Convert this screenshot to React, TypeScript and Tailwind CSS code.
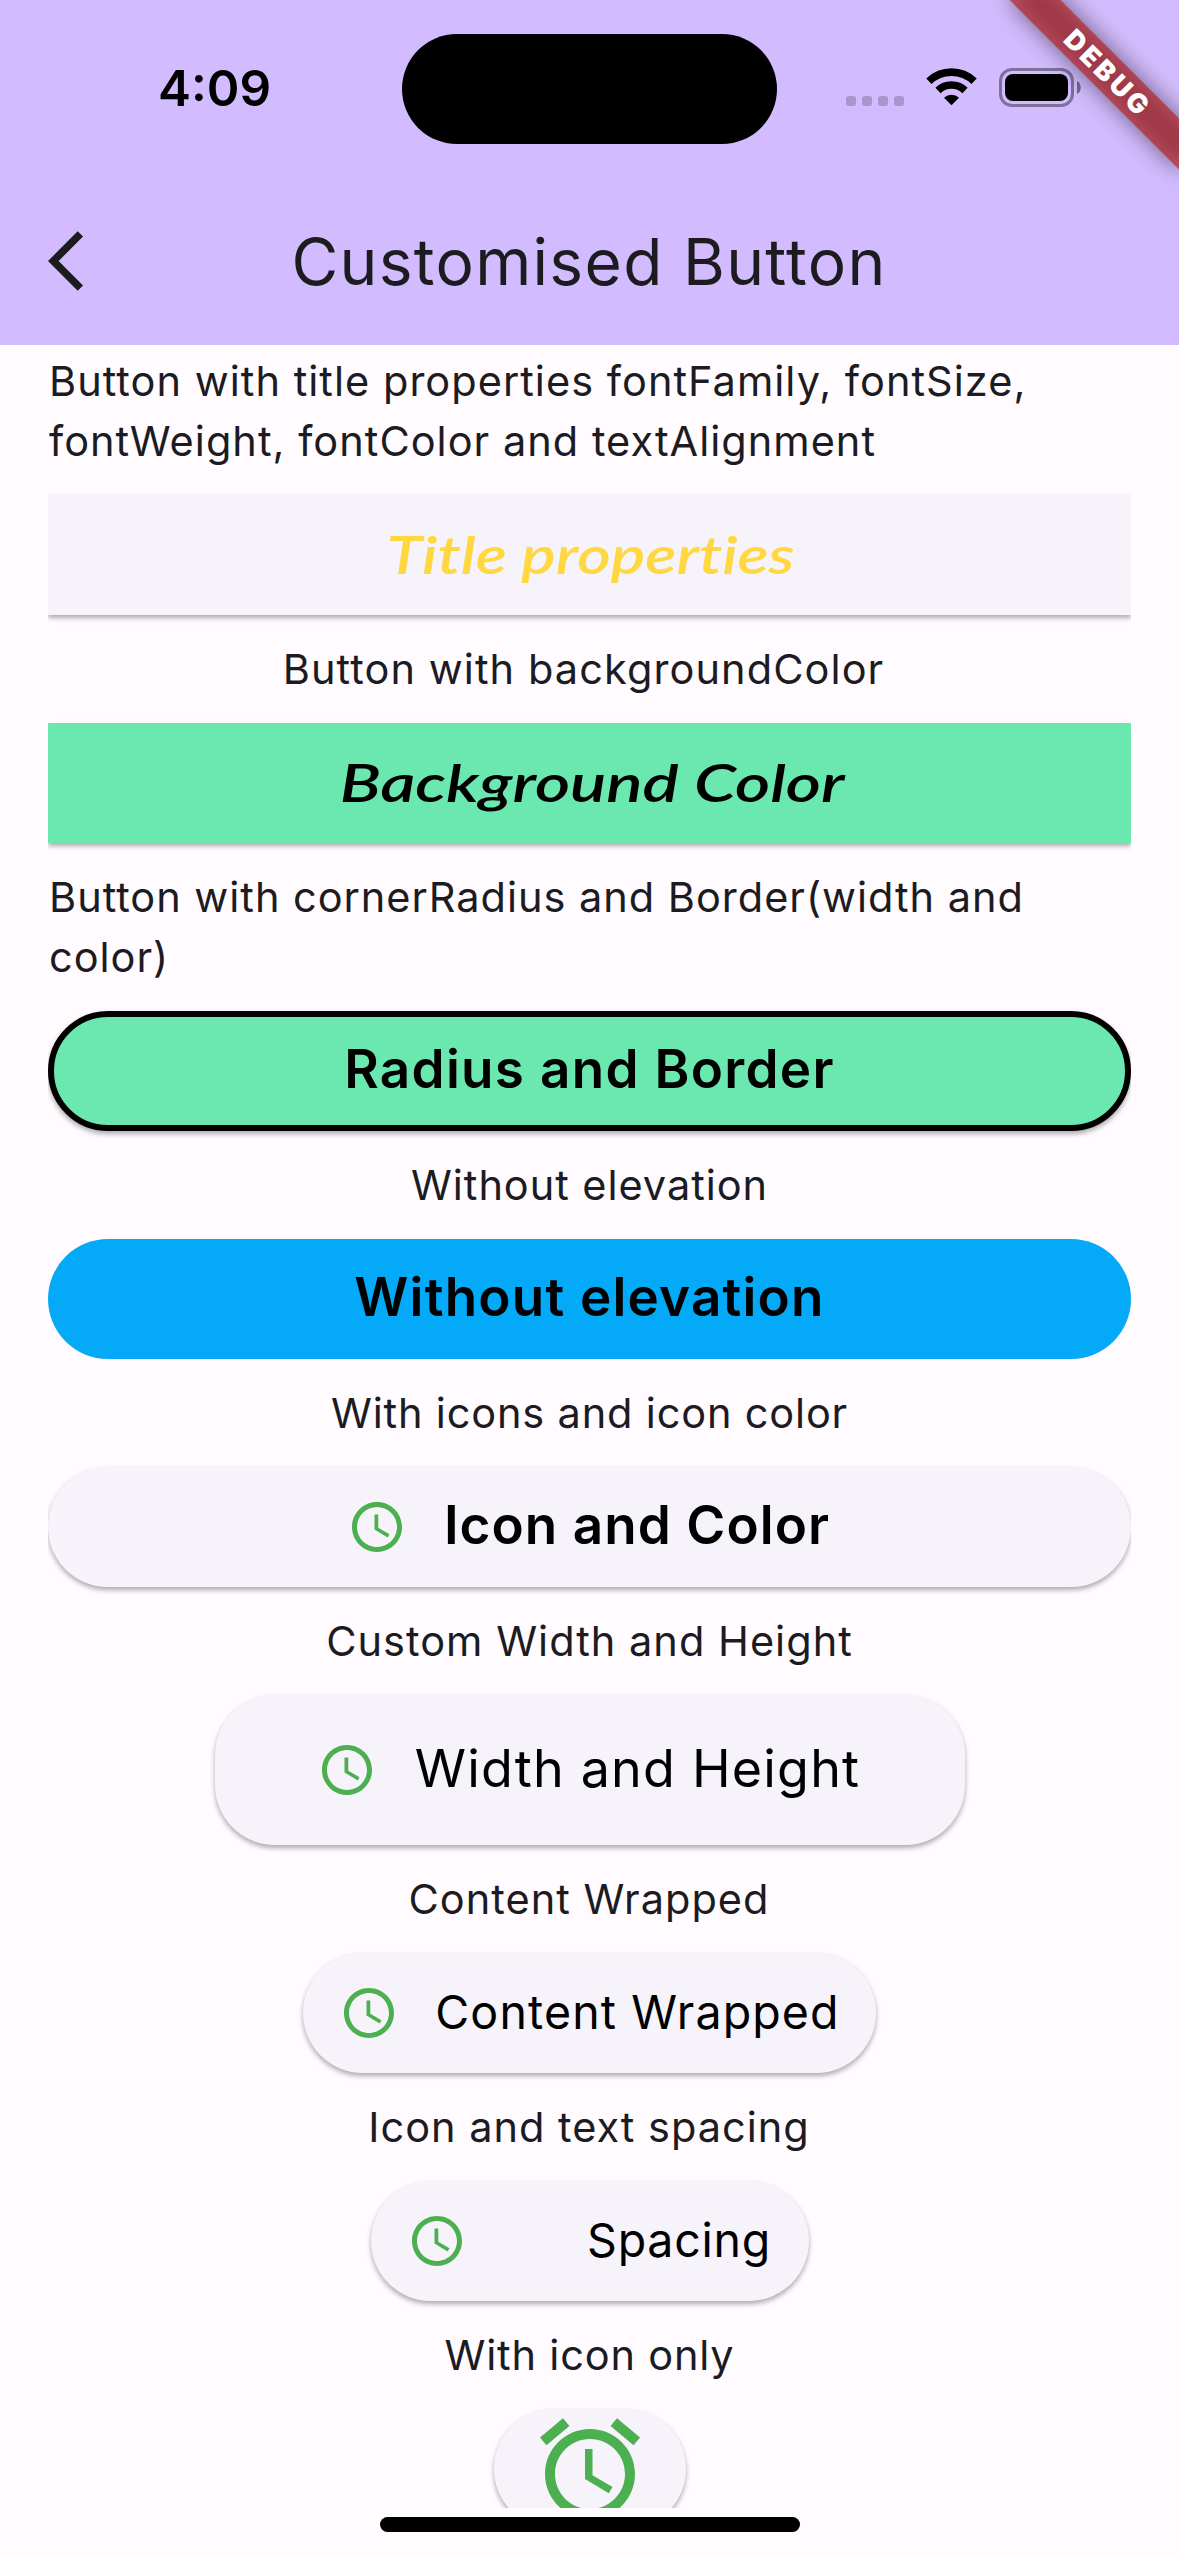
import type { ReactNode } from "react";

function BackIcon() {
  return (
    <svg viewBox="0 0 24 24" className="h-[72px] w-[72px]" fill="#1c1b1f">
      <path d="M11.67 3.87L9.9 2.1 0 12l9.9 9.9 1.77-1.77L3.54 12z" />
    </svg>
  );
}

function ClockIcon() {
  return (
    <svg viewBox="0 0 24 24" className="h-[60px] w-[60px] shrink-0" fill="#4caf50">
      <path d="M11.99 2C6.47 2 2 6.48 2 12s4.47 10 9.99 10C17.52 22 22 17.52 22 12S17.52 2 11.99 2zM12 20c-4.42 0-8-3.58-8-8s3.58-8 8-8 8 3.58 8 8-3.58 8-8 8zM12.5 7H11v6l5.25 3.15.75-1.23-4.5-2.67z" />
    </svg>
  );
}

function AlarmIcon() {
  return (
    <svg viewBox="0 0 24 24" className="h-[120px] w-[120px] shrink-0" fill="#4caf50">
      <path d="M22 5.72l-4.6-3.86-1.29 1.53 4.6 3.86L22 5.72zM7.88 3.39L6.6 1.86 2 5.71l1.29 1.53 4.59-3.85zM12.5 8H11v6l4.75 2.85.75-1.23-4-2.37V8zM12 4c-4.97 0-9 4.03-9 9s4.02 9 9 9c4.97 0 9-4.03 9-9s-4.03-9-9-9zm0 16c-3.87 0-7-3.13-7-7s3.13-7 7-7 7 3.13 7 7-3.13 7-7 7z" />
    </svg>
  );
}

function WifiIcon() {
  return (
    <svg viewBox="0 0 51 38" className="h-[38px] w-[51px]" fill="none" stroke="#000" strokeWidth="7.6">
      <path d="M2.9 13.2a32.6 32.6 0 0 1 45.2 0" />
      <path d="M12 22.4a19.6 19.6 0 0 1 27 0" />
      <path d="M25.5 37.2L18 29.7a10.8 10.8 0 0 1 15 0z" fill="#000" stroke="none" />
    </svg>
  );
}

function Battery() {
  return (
    <div className="flex items-center gap-[3px]">
      <div className="h-[39px] w-[75px] rounded-[13px] border-[3px] border-black/40 p-[3px]">
        <div className="h-[27px] w-[63px] rounded-[8px] bg-black" />
      </div>
      <svg viewBox="0 0 4 13" className="h-[13px] w-[4px]">
        <path d="M0 0c5 2 5 11 0 13z" fill="#000" fillOpacity=".45" />
      </svg>
    </div>
  );
}

function StatusBar() {
  return (
    <div className="flex h-[177px] items-start">
      <div className="w-[402px] pt-[58px] pl-[158px] text-[49.5px] leading-[60px] font-semibold text-black">4:09</div>
      <div className="mt-[34px] h-[110px] w-[375px] rounded-full bg-black" />
      <div className="ml-[69px] flex pt-[68px]">
        <div className="flex gap-[6px] pt-[28px]">
          {[0, 1, 2, 3].map((dot) => (
            <span key={dot} className="h-[10px] w-[10px] rounded-[3px] bg-[#a996cf]" />
          ))}
        </div>
        <div className="ml-[22px] h-[38px]">
          <WifiIcon />
        </div>
        <div className="ml-[22px]">
          <Battery />
        </div>
      </div>
    </div>
  );
}

function DebugBanner() {
  return (
    <div className="absolute top-0 right-0 h-[260px] w-[260px] overflow-hidden">
      <div className="absolute top-[54px] left-[68px] h-[36px] w-[240px] rotate-45">
        <div className="absolute inset-0 bg-black/50 blur-[12px]" />
        <div className="absolute inset-0 flex items-center justify-center bg-[#b71c1c]/63 pl-[3px] text-[27px] leading-none font-black tracking-[3.3px] text-white">
          DEBUG
        </div>
      </div>
    </div>
  );
}

function Caption({ className = "", children }: { className?: string; children: ReactNode }) {
  return <p className={`my-[24px] text-[41.5px] leading-[60px] text-[#1c1b1f] ${className}`}>{children}</p>;
}

const elevated = "shadow-[0_3px_4px_rgba(0,0,0,0.22),0_3px_7px_rgba(0,0,0,0.12)]";

function Button({ className, children }: { className: string; children: ReactNode }) {
  return <button className={`flex shrink-0 items-center justify-center whitespace-nowrap text-black ${className}`}>{children}</button>;
}

export default function App() {
  return (
    <div className="relative flex h-[2556px] w-[1179px] flex-col overflow-hidden bg-[#fffbff] font-['Inter',sans-serif]">
      <header className="h-[345px] shrink-0 bg-[#d2bcff]">
        <StatusBar />
        <div className="grid h-[168px] grid-cols-[210px_1fr_210px] items-center">
          <div className="pl-[48px]">
            <BackIcon />
          </div>
          <h1 className="pt-[2px] pr-[1px] text-center text-[64px] leading-[84px] tracking-[1.33px] whitespace-nowrap text-[#1c1b1f]">
            Customised Button
          </h1>
        </div>
      </header>

      <main className="mx-[48px] flex h-[2163px] shrink-0 flex-col items-center overflow-hidden">
        <Caption className="mt-[6px] w-full pl-px tracking-[1.03px]">
          Button with title properties fontFamily, fontSize,
          <br />
          <span className="tracking-[1.02px]">fontWeight, fontColor and textAlignment</span>
        </Caption>
        <Button className={`h-[120px] w-full bg-[#f6f3fa] pb-[3px] pl-[3px] ${elevated}`}>
          <span className="inline-block scale-x-[1.24] font-['Lato'] text-[52px] font-semibold text-[#ffd740] italic [font-variant-ligatures:none]">
            Title properties
          </span>
        </Button>

        <Caption className="pr-[12px] tracking-[1.08px]">Button with backgroundColor</Caption>
        <Button className={`h-[120px] w-full bg-[#6be8b0] pb-[3px] pl-[5px] ${elevated}`}>
          <span className="inline-block scale-x-[1.3] font-['Lato'] text-[52px] font-semibold italic">Background Color</span>
        </Button>

        <Caption className="w-full pl-px tracking-[0.98px]">
          Button with cornerRadius and Border(width and
          <br />
          color)
        </Caption>
        <Button className={`h-[120px] w-full rounded-[60px] border-[6px] border-black bg-[#6be8b0] pb-[2px] text-[53px] font-semibold tracking-[1.3px] ${elevated}`}>
          Radius and Border
        </Button>

        <Caption className="tracking-[0.95px]">Without elevation</Caption>
        <Button className="h-[120px] w-full rounded-[60px] bg-[#04a9f7] pb-[2px] text-[53px] font-semibold tracking-[1.2px]">
          Without elevation
        </Button>

        <Caption className="tracking-[0.83px]">With icons and icon color</Caption>
        <Button className={`h-[120px] w-full gap-[37px] rounded-[60px] bg-[#f6f3fa] pr-[2px] text-[53px] font-semibold tracking-[1.06px] ${elevated}`}>
          <ClockIcon />
          <span className="pb-[2px]">Icon and Color</span>
        </Button>

        <Caption className="tracking-[1.02px]">Custom Width and Height</Caption>
        <Button className={`h-[150px] w-[750px] gap-[38px] rounded-[60px] bg-[#f6f3fa] pr-[2px] text-[52px] tracking-[1.2px] ${elevated}`}>
          <ClockIcon />
          <span className="pb-[2px]">Width and Height</span>
        </Button>

        <Caption className="pr-px tracking-[1.02px]">Content Wrapped</Caption>
        <Button className={`h-[120px] w-[573px] gap-[36px] rounded-[60px] bg-[#f6f3fa] text-[46.5px] tracking-[1.14px] ${elevated}`}>
          <ClockIcon />
          <span>Content Wrapped</span>
        </Button>

        <Caption className="pr-px tracking-[0.98px]">Icon and text spacing</Caption>
        <Button className={`h-[120px] w-[438px] gap-[120px] rounded-[60px] bg-[#f6f3fa] pr-px text-[46.5px] tracking-[0.73px] ${elevated}`}>
          <ClockIcon />
          <span>Spacing</span>
        </Button>

        <Caption className="tracking-[0.82px]">With icon only</Caption>
        <Button className={`h-[120px] w-[192px] rounded-[60px] bg-[#f6f3fa] ${elevated}`}>
          <AlarmIcon />
        </Button>
      </main>

      <div className="mt-[9px] h-[15px] w-[420px] shrink-0 self-center rounded-full bg-black" />
      <DebugBanner />
    </div>
  );
}
